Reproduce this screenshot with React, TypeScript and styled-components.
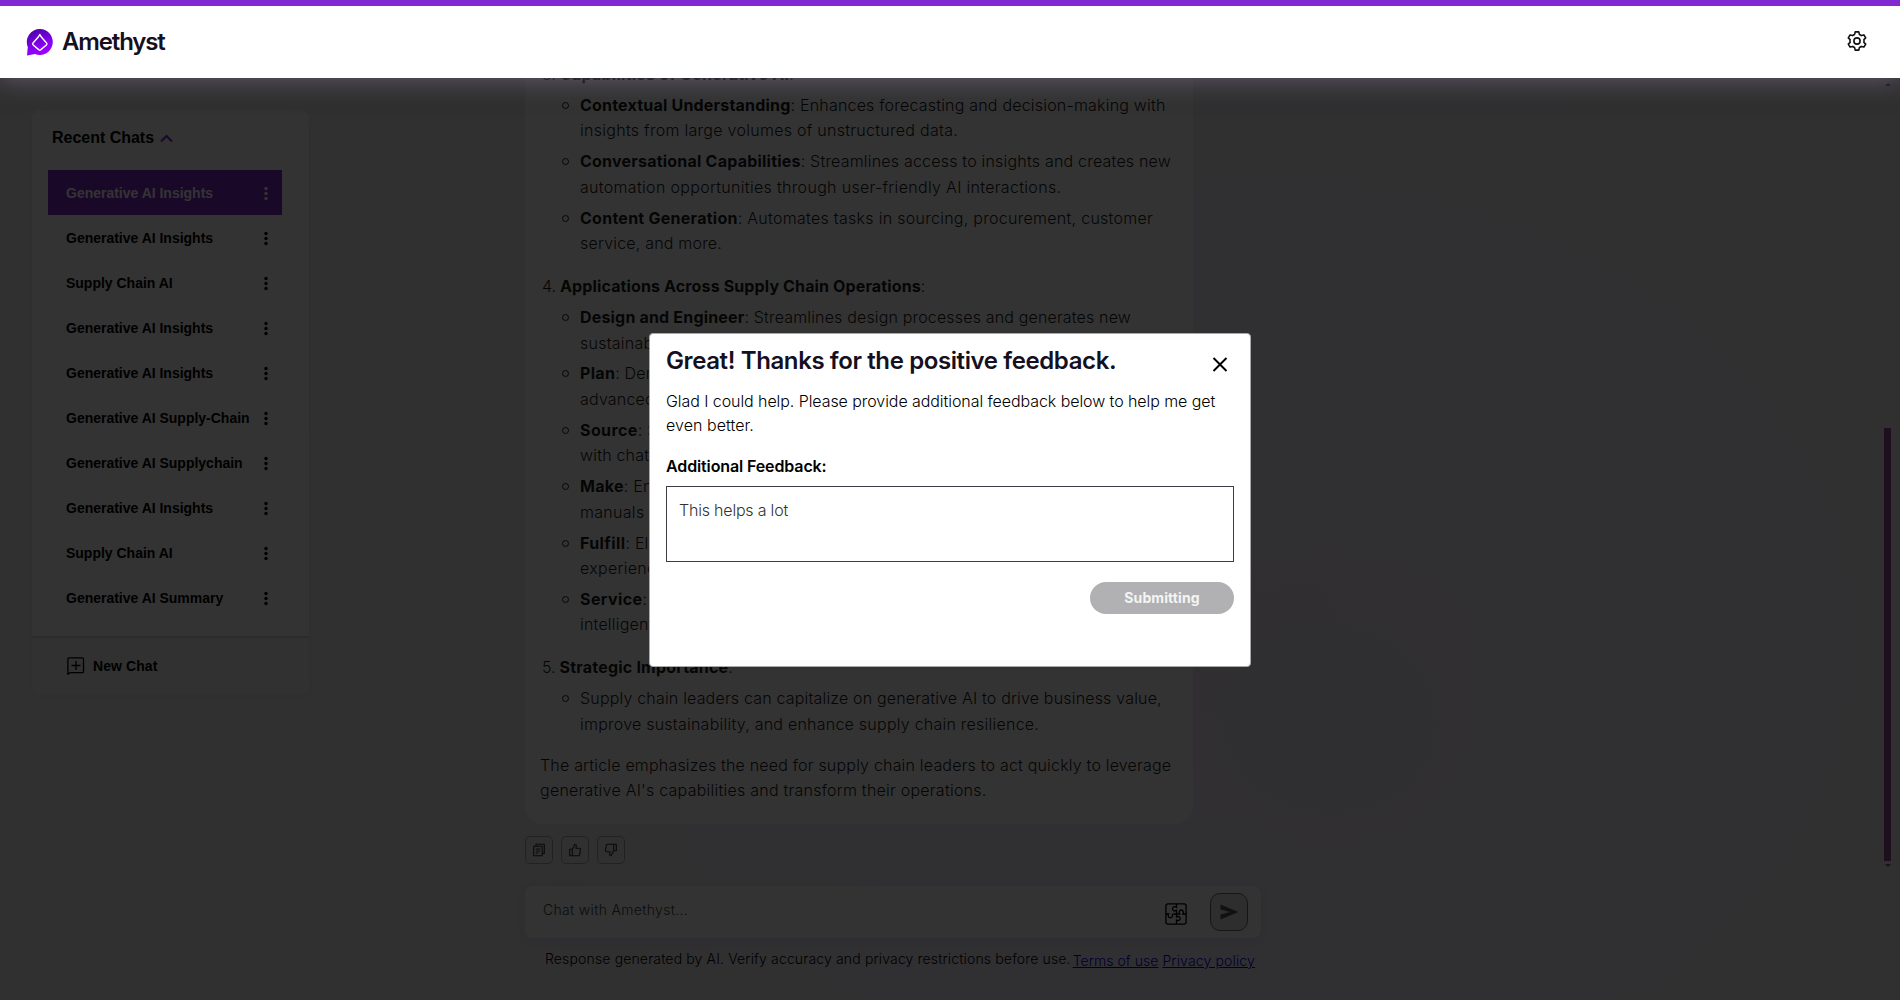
import React from "react";
import styled, { createGlobalStyle } from "styled-components";

const Global = createGlobalStyle`
  * { box-sizing: border-box; }
  html, body { margin: 0; height: 100%; overflow: hidden; }
  body { font-family: Inter, "Liberation Sans", sans-serif; color: #000; }
  ul, ol, p, h1, h2 { margin: 0; padding: 0; list-style: none; }
  button, textarea { font-family: inherit; }
`;

const Page = styled.div`
  position: relative;
  width: 1900px;
  height: 1000px;
  overflow: hidden;
  display: flex;
  flex-direction: column;
  background:
    radial-gradient(ellipse 340px 300px at 1330px 720px, rgba(228, 222, 244, 0.4), rgba(228, 222, 244, 0) 100%),
    radial-gradient(ellipse 1000px 760px at 1240px 640px, #f0eaf3 0%, #f1ecf3 50%, #f0f0f1 100%);
`;

const Header = styled.header`
  position: relative;
  z-index: 3;
  height: 78px;
  flex: none;
  display: flex;
  align-items: center;
  justify-content: space-between;
  padding: 0 33px 0 26px;
  border-top: 6px solid #8129d2;
  background: #fff;
  box-shadow: 0 0 24px rgba(162, 140, 184, 0.5);
`;

const Brand = styled.div`
  display: flex;
  align-items: center;
  gap: 9px;
`;

const BrandName = styled.h1`
  font-size: 24px;
  line-height: 30px;
  font-weight: 600;
  letter-spacing: -1.15px;
  color: #14101f;
`;

const Body = styled.div`
  flex: 1;
  display: flex;
  align-items: flex-start;
  min-height: 0;
`;

const Sidebar = styled.aside`
  width: 277px;
  margin: 32px 0 0 32px;
  border-radius: 8px;
  box-shadow: 0 2px 12px rgba(120, 120, 160, 0.08);
  font-family: "Liberation Sans", Arial, sans-serif;
`;

const Recent = styled.div`
  height: 526px;
  padding: 16px 27px 0 16px;
  background: #fdfdfd;
  border-radius: 8px 8px 0 0;
`;

const RecentTitle = styled.div`
  display: flex;
  align-items: center;
  gap: 6px;
  height: 24px;
  padding-left: 4px;
  margin-bottom: 20px;
  font-size: 16px;
  font-weight: 700;
  letter-spacing: -0.02px;
`;

const ChatRow = styled.li<{ $active?: boolean }>`
  display: flex;
  align-items: center;
  justify-content: space-between;
  height: 45px;
  padding: 0 11px 0 18px;
  font-size: 14px;
  font-weight: 700;
  letter-spacing: -0.01px;
  color: ${(p) => (p.$active ? "#fff" : "#000")};
  background: ${(p) => (p.$active ? "#8228cd" : "transparent")};
`;

const NewChat = styled.div`
  display: flex;
  align-items: center;
  gap: 8px;
  height: 59px;
  padding: 0 0 2px 35px;
  border-top: 2px solid #dcdcdc;
  background: #f3f3f3;
  border-radius: 0 0 8px 8px;
  font-size: 14px;
  font-weight: 700;
  letter-spacing: 0.08px;
`;

const Main = styled.main`
  width: 738px;
  margin-left: 216px;
  display: flex;
  flex-direction: column;
`;

const Answer = styled.article`
  width: 668px;
  height: 746px;
  padding: 0 15px 20px;
  display: flex;
  flex-direction: column;
  justify-content: flex-end;
  overflow: hidden;
  background: #fff;
  border-radius: 0 0 18px 18px;
  font-size: 16px;
  line-height: 25.6px;
  font-weight: 300;
  color: #1c1c1c;
`;

const Line = styled.span<{ $ls?: number }>`
  display: block;
  white-space: pre;
  letter-spacing: ${(p) => p.$ls ?? 0}px;
`;

const B = styled.b<{ $ls?: number }>`
  font-weight: 700;
  letter-spacing: ${(p) => p.$ls ?? 0}px;
`;

const Section = styled.section`
  margin-bottom: 17.4px;
`;

const SectionTitle = styled.div`
  display: flex;
  gap: 4px;
  padding-left: 2px;
  margin-bottom: 5.2px;
  white-space: pre;
`;

const Point = styled.li`
  display: flex;
  margin-bottom: 5.2px;
  &:last-child { margin-bottom: 0; }
`;

const Dot = styled.i`
  flex: none;
  width: 7px;
  height: 7px;
  margin: 9px 11px 0 22px;
  border: 1px solid #1c1c1c;
  border-radius: 50%;
`;

const Closing = styled.p`
  margin-top: -2px;
`;

const Actions = styled.div`
  display: flex;
  gap: 8px;
  margin-top: 12px;
`;

const ActionButton = styled.button`
  width: 28px;
  height: 28px;
  padding: 0;
  display: grid;
  place-items: center;
  border: 1px solid #a8a8ac;
  border-radius: 5px;
  background: transparent;
`;

const Composer = styled.div`
  display: flex;
  align-items: center;
  width: 736px;
  height: 52px;
  margin-top: 22px;
  padding: 0 13px 0 18px;
  background: #fff;
  border-radius: 8px;
  box-shadow: 0 3px 12px rgba(110, 100, 190, 0.12);
`;

const Placeholder = styled.span`
  flex: 1;
  font-size: 14px;
  font-weight: 300;
  color: #444;
  letter-spacing: 0.32px;
  padding-bottom: 6px;
`;

const PuzzleIcon = styled.svg`
  width: 22px;
  height: 22px;
  margin-top: 3px;
`;

const SendButton = styled.button`
  width: 38px;
  height: 38px;
  margin-left: 23px;
  padding: 0;
  display: grid;
  place-items: center;
  border: 1px solid #6a6a6a;
  border-radius: 10px;
  background: #e6e6e6;
`;

const Legal = styled.div`
  display: flex;
  margin: 11px 0 0 20px;
  font-size: 14px;
  line-height: 20px;
  font-weight: 300;
  white-space: pre;
`;

const LegalLink = styled.a<{ $ls: number }>`
  margin: 2px 2px 0 2px;
  color: #0000ee;
  text-decoration: underline;
  letter-spacing: ${(p) => p.$ls}px;
`;

const ScrollTrack = styled.div`
  margin-left: auto;
  width: 7px;
  height: 789px;
  margin-right: 9px;
  padding-top: 5px;
  display: flex;
  flex-direction: column;
  align-items: center;
  justify-content: space-between;
`;

const Thumb = styled.div`
  width: 7px;
  height: 433px;
  margin: auto 0 3px;
  background: #944a9c;
`;

const Arrow = styled.i<{ $down?: boolean }>`
  width: 0;
  height: 0;
  border: 3px solid transparent;
  border-top: ${(p) => (p.$down ? "3px solid #944a9c" : "0")};
  border-bottom: ${(p) => (p.$down ? "0" : "3px solid #944a9c")};
`;

const Overlay = styled.div`
  position: absolute;
  inset: 0;
  z-index: 2;
  background: rgba(0, 0, 0, 0.8);
`;

const Dialog = styled.div`
  position: absolute;
  z-index: 4;
  left: 649px;
  top: 333px;
  width: 602px;
  height: 334px;
  padding: 11px 16px;
  background: #fff;
  border: 1px solid #a9a9a9;
  border-radius: 4px;
`;

const DialogHead = styled.div`
  display: flex;
  justify-content: space-between;
`;

const DialogTitle = styled.h2`
  font-size: 24px;
  line-height: 32px;
  font-weight: 600;
  letter-spacing: -0.39px;
  white-space: nowrap;
  color: #14101f;
`;

const CloseIcon = styled.svg`
  width: 16px;
  height: 16px;
  margin: 11px 6.5px 0 0;
`;

const DialogText = styled.p`
  margin-top: 12px;
  font-size: 16px;
  line-height: 24px;
  font-weight: 300;
`;

const FieldLabel = styled.label`
  display: block;
  margin-top: 17px;
  font-size: 16px;
  line-height: 24px;
  font-weight: 600;
  letter-spacing: -0.12px;
`;

const Field = styled.div`
  height: 76px;
  margin-top: 8px;
  padding: 11px 12px;
  border: 1px solid #3d3b45;
  font-size: 16px;
  line-height: 24px;
  font-weight: 300;
  letter-spacing: -0.2px;
  color: #333;
`;

const Submit = styled.button`
  display: block;
  width: 144px;
  height: 32px;
  margin: 20px 0 0 auto;
  padding: 0 0 2px;
  border: 0;
  border-radius: 16px;
  background: #b1b1b3;
  color: #f4f4f4;
  font-size: 14px;
  font-weight: 700;
  letter-spacing: 0.1px;
`;

const Logo = () => (
  <svg width="27" height="28" viewBox="0 0 27 28">
    <defs>
      <linearGradient id="gem" x1="0.2" y1="0" x2="0.6" y2="1">
        <stop offset="0" stopColor="#4b00a8" />
        <stop offset="0.7" stopColor="#8a00f5" />
        <stop offset="1" stopColor="#a100ff" />
      </linearGradient>
    </defs>
    <path d="M14 1a13 13 0 1 1-5 25.1L1 27.500 1.800 19A13 13 0 0 1 14 1Z" fill="url(#gem)" />
    <path d="M13.800 6.500C14.600 9 18 11.500 20.700 15.200c.5.700.4 1.300-.3 1.800L14.600 21.900c-.5.4-1.100.4-1.600 0L7.200 17c-.7-.5-.8-1.100-.3-1.800C9.600 11.500 13 9 13.800 6.500Z" fill="none" stroke="#fff" strokeWidth="1.400" strokeLinejoin="round" />
  </svg>
);

const GearIcon = styled.svg`
  width: 20px;
  height: 20px;
  margin: 0 0.5px 3px 0;
`;

const Gear = () => (
  <GearIcon viewBox="0 0 20 20" fill="none" stroke="#111" strokeWidth="1.6" strokeLinejoin="round">
    <path d="M8.200.9h3.600l.6 2.500q1.100.4 2 1.200l2.500-.7 1.800 3-1.800 1.700q.3 1.500 0 2.800l1.800 1.700-1.800 3-2.500-.7q-.9.8-2 1.200l-.6 2.500H8.200l-.6-2.500q-1.100-.4-2-1.200l-2.500.7-1.800-3 1.800-1.700q-.3-1.400 0-2.800L1.300 6.900l1.800-3 2.500.7q.9-.8 2-1.200Z" />
    <circle cx="10" cy="10" r="3.100" />
  </GearIcon>
);

const More = () => (
  <svg width="10" height="16" viewBox="0 0 10 16" fill="currentColor">
    <circle cx="5" cy="3.500" r="1.700" />
    <circle cx="5" cy="8.500" r="1.700" />
    <circle cx="5" cy="13.500" r="1.700" />
  </svg>
);

const icon = { width: 14, height: 14, viewBox: "0 0 14 14", fill: "none", stroke: "#333", strokeWidth: 1.1 };
const thumb = "M4.300 6.200 7 1.300c1.100 0 1.500.7 1.300 1.600L7.900 5.300h3.400c.8 0 1.300.6 1.200 1.300l-.8 5c-.1.700-.6 1.100-1.300 1.100H4.300ZM4.300 6.200H1.700v6.500h2.600";

const chats = [
  "Generative AI Insights", "Generative AI Insights", "Supply Chain AI", "Generative AI Insights", "Generative AI Insights",
  "Generative AI Supply-Chain", "Generative AI Supplychain", "Generative AI Insights", "Supply Chain AI", "Generative AI Summary",
];

type Item = { term?: string; tls?: number; text: string; ls?: number; next: string; nls?: number };

const capabilities: Item[] = [
  { term: "Contextual Understanding", tls: 0.2, text: ": Enhances forecasting and decision-making with", ls: 0.2, next: "insights from large volumes of unstructured data.", nls: 0.28 },
  { term: "Conversational Capabilities", tls: 0.22, text: ": Streamlines access to insights and creates new", ls: 0.2, next: "automation opportunities through user-friendly AI interactions.", nls: 0.315 },
  { term: "Content Generation", tls: 0.26, text: ": Automates tasks in sourcing, procurement, customer", ls: 0.28, next: "service, and more.", nls: 0.2 },
];

const applications: Item[] = [
  { term: "Design and Engineer", tls: 0.18, text: ": Streamlines design processes and generates new", ls: 0.16, next: "sustainable options.", nls: 0.25 },
  { term: "Plan", tls: 0.3, text: ": Demand planning", ls: 0.2, next: "advanced analytics.", nls: 0.2 },
  { term: "Source", tls: 0.4, text: ": Supports buyers", ls: 0.2, next: "with chat tools.", nls: 0.2 },
  { term: "Make", tls: 0.3, text: ": Enhances", ls: 0.2, next: "manuals and guides.", nls: 0.3 },
  { term: "Fulfill", tls: 0.4, text: ": Elevates", ls: 0.2, next: "experiences.", nls: 0.3 },
  { term: "Service", tls: 0.4, text: ": Improves", ls: 0.2, next: "intelligent support.", nls: 0.2 },
];

const strategy: Item[] = [
  { text: "Supply chain leaders can capitalize on generative AI to drive business value,", ls: 0.18, next: "improve sustainability, and enhance supply chain resilience.", nls: 0.235 },
];

const Block = ({ n, title, ls, items }: { n: number; title: string; ls?: number; items: Item[] }) => (
  <Section>
    <SectionTitle>
      <span>{n}.</span>
      <span><B $ls={ls}>{title}</B>:</span>
    </SectionTitle>
    <ul>
      {items.map((it) => (
        <Point key={it.next}>
          <Dot />
          <div>
            <Line $ls={it.ls}>{it.term && <B $ls={it.tls}>{it.term}</B>}{it.text}</Line>
            <Line $ls={it.nls}>{it.next}</Line>
          </div>
        </Point>
      ))}
    </ul>
  </Section>
);

export default function App() {
  return (
    <Page>
      <Global />
      <Header>
        <Brand><Logo /><BrandName>Amethyst</BrandName></Brand>
        <Gear />
      </Header>
      <Body>
        <Sidebar>
          <Recent>
            <RecentTitle>
              Recent Chats
              <svg width="13" height="9" viewBox="0 0 13 9" fill="none" stroke="#8228cd" strokeWidth="2"><path d="M1 7.500 6.500 2 12 7.500" /></svg>
            </RecentTitle>
            <ul>
              {chats.map((c, i) => (
                <ChatRow key={i} $active={i === 0}>{c}<More /></ChatRow>
              ))}
            </ul>
          </Recent>
          <NewChat>
            <svg width="18" height="18" viewBox="0 0 18 18" fill="none" stroke="#000" strokeWidth="1.300"><path d="M1.900.9H15.500a1 1 0 0 1 1 1V14.700a1 1 0 0 1-1 1H3.200L.9 17.300V1.900a1 1 0 0 1 1-1ZM9 4v9M4.500 8.500h9" /></svg>
            New Chat
          </NewChat>
        </Sidebar>
        <Main>
          <Answer>
            <Block n={3} title="Capabilities of Generative AI" ls={0.25} items={capabilities} />
            <Block n={4} title="Applications Across Supply Chain Operations" ls={0.13} items={applications} />
            <Block n={5} title="Strategic Importance" ls={0.2} items={strategy} />
            <Closing>
              <Line $ls={0.19}>The article emphasizes the need for supply chain leaders to act quickly to leverage</Line>
              <Line $ls={0.24}>generative AI's capabilities and transform their operations.</Line>
            </Closing>
          </Answer>
          <Actions>
            <ActionButton><svg {...icon}><path d="M4 3V1.200h8.300v9.300h-1.800M1.700 3.200h8.500v9.600H1.700ZM3.800 6h4.400M3.800 8h4.400M3.800 10h2.500" /></svg></ActionButton>
            <ActionButton><svg {...icon}><path d={thumb} /></svg></ActionButton>
            <ActionButton><svg {...icon}><path d={thumb} transform="rotate(180 7 7)" /></svg></ActionButton>
          </Actions>
          <Composer>
            <Placeholder>Chat with Amethyst...</Placeholder>
            <PuzzleIcon viewBox="0 0 22 22" fill="none" stroke="#000" strokeWidth="1.300">
              <rect x="0.900" y="0.900" width="20.200" height="20.200" rx="2" />
              <path d="M11.500 1v3.200c-1.400-1-4-.6-4 1.600s2.600 2.600 4 1.600V11H8.200M1 11h2.600c-.9 1.500-.4 3.800 1.700 3.800S8 12.500 7.200 11M11.500 11h3.200c-1-1.500-.4-4 1.600-4s2.600 2.500 1.600 4H21M11.500 11v3c1.300-1 3.700-.5 3.700 1.500s-2.400 2.600-3.700 1.600V21" />
            </PuzzleIcon>
            <SendButton><svg width="20" height="18" viewBox="0 0 20 18" fill="#555"><path d="M1.500 1.500 19.500 9l-18 7.500V11.500L11 9 1.500 6.500Z" /></svg></SendButton>
          </Composer>
          <Legal>
            <Line $ls={0.15}>Response generated by AI. Verify accuracy and privacy restrictions before use.</Line>
            <LegalLink $ls={0.05}>Terms of use</LegalLink>
            <LegalLink $ls={0.15}>Privacy policy</LegalLink>
          </Legal>
        </Main>
        <ScrollTrack><Arrow /><Thumb /><Arrow $down /></ScrollTrack>
      </Body>
      <Overlay />
      <Dialog>
        <DialogHead>
          <DialogTitle>Great! Thanks for the positive feedback.</DialogTitle>
          <CloseIcon viewBox="0 0 16 16" fill="none" stroke="#000" strokeWidth="2"><path d="M1.500 2l13 13M14.500 2l-13 13" /></CloseIcon>
        </DialogHead>
        <DialogText>
          <Line $ls={-0.07}>Glad I could help. Please provide additional feedback below to help me get</Line>
          <Line $ls={0.05}>even better.</Line>
        </DialogText>
        <FieldLabel>Additional Feedback:</FieldLabel>
        <Field>This helps a lot</Field>
        <Submit>Submitting</Submit>
      </Dialog>
    </Page>
  );
}
